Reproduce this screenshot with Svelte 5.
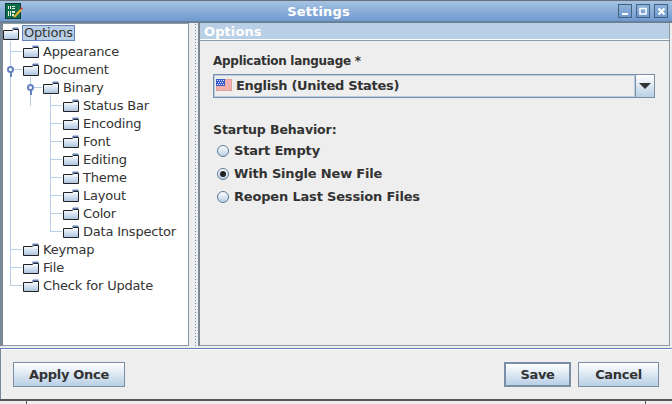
<script>
  const tree = [
    { label: 'Options', level: 0, selected: true, root: true },
    { label: 'Appearance', level: 1 },
    { label: 'Document', level: 1, open: true },
    { label: 'Binary', level: 2, open: true },
    { label: 'Status Bar', level: 3 },
    { label: 'Encoding', level: 3 },
    { label: 'Font', level: 3 },
    { label: 'Editing', level: 3 },
    { label: 'Theme', level: 3 },
    { label: 'Layout', level: 3 },
    { label: 'Color', level: 3 },
    { label: 'Data Inspector', level: 3 },
    { label: 'Keymap', level: 1 },
    { label: 'File', level: 1 },
    { label: 'Check for Update', level: 1 }
  ];
  const radios = [
    { label: 'Start Empty', checked: false },
    { label: 'With Single New File', checked: true },
    { label: 'Reopen Last Session Files', checked: false }
  ];
</script>

<div class="window">
  <header class="titlebar">
    <svg class="appicon" width="18" height="17" viewBox="0 0 18 17">
      <rect x="0.5" y="0.5" width="15" height="15" fill="#0f6b4e" stroke="#0b3d33"/>
      <path d="M3 3h1v3H3zM5 3h1v3H5zM7 3h3v1H7zM7 5h3v1H7zM3 8h1v5H3zM5 8h1v5H5zM7 8h3v2H7zM7 11h2v2H7z" fill="#e8f0d8"/>
      <path d="M8 14l7-8 2 1.500-7 7z" fill="#e8b030"/>
      <path d="M15 5l1-1 2 1.500-1 1.500z" fill="#d84040"/>
    </svg>
    <span class="title">Settings</span>
    <div class="winbtns">
      <span class="winbtn"><svg width="8" height="8" viewBox="0 0 8 8"><rect x="1" y="6" width="6" height="2" fill="#fff"/></svg></span>
      <span class="winbtn"><svg width="8" height="8" viewBox="0 0 8 8"><path d="M1 1.500h6v5.500h-6z" fill="none" stroke="#fff" stroke-width="1.500"/></svg></span>
      <span class="winbtn"><svg width="9" height="9" viewBox="0 0 9 9"><path d="M1.500 1.500l6 6M7.500 1.500l-6 6" stroke="#fff" stroke-width="2.200"/></svg></span>
    </div>
  </header>

  <div class="main">
    <nav class="tree">
      {#each tree as item}
        <div class="row lvl{item.level}" class:root={item.root}>
          {#if !item.root}<span class="hline"></span>{/if}
          {#if item.open}<span class="knob"></span>{/if}
          <svg class="folder" width="16" height="13" viewBox="0 0 16 13">
            <defs>
              <linearGradient id="fg" x1="0" y1="0" x2="0" y2="1">
                <stop offset="0" stop-color="#fff"/>
                <stop offset="1" stop-color="#a9c3e0"/>
              </linearGradient>
            </defs>
            <path d="M9 1.500l1.500-1h5v2h-6.500z" fill="#6382bf"/>
            <path d="M0.500 3.500h9l1-1h5v10h-15z" fill="url(#fg)" stroke="#222"/>
          </svg>
          <span class="label" class:selected={item.selected}>{item.label}</span>
        </div>
      {/each}
      <span class="vline v1"></span>
      <span class="vline v2"></span>
      <span class="vline v3"></span>
    </nav>

    <div class="divider"></div>

    <section class="panel">
      <h2 class="paneltitle">Options</h2>
      <div class="panelbody">
        <div class="field-label">Application language *</div>
        <div class="combo">
          <div class="combo-value">
            <svg width="16" height="12" viewBox="0 0 16 12">
              <rect width="16" height="12" fill="#fff"/>
              <path d="M0 1h16M0 3h16M0 5h16M0 7h16M0 9h16M0 11h16" stroke="#e8605c" stroke-width="1"/>
              <rect x="0.250" y="0.250" width="15.500" height="11.500" fill="none" stroke="#c98" stroke-width="0.500"/>
              <rect x="0" y="0" width="9" height="7" fill="#3a5cc8"/>
              <path d="M1 1.500h1M3 1.500h1M5 1.500h1M7 1.500h1M2 3.500h1M4 3.500h1M6 3.500h1M1 5.500h1M3 5.500h1M5 5.500h1M7 5.500h1" stroke="#dde6ff" stroke-width="1"/>
            </svg>
            <span>English (United States)</span>
          </div>
          <div class="combo-btn"><span class="arrow"></span></div>
        </div>

        <div class="group-label">Startup Behavior:</div>
        <div class="radios">
          {#each radios as r}
            <div class="radio-row">
              <span class="radio" class:checked={r.checked}></span>
              <span>{r.label}</span>
            </div>
          {/each}
        </div>
      </div>
    </section>
  </div>

  <footer class="footer">
    <button class="btn apply">Apply Once</button>
    <div class="spacer"></div>
    <button class="btn save">Save</button>
    <button class="btn cancel">Cancel</button>
  </footer>
  <div class="under"><span class="tick t1"></span><span class="tick t2"></span></div>
</div>

<style>
  :global(body) { margin: 0; background: #fff; }
  .window {
    width: 672px; height: 404px; box-sizing: border-box; overflow: hidden;
    display: flex; flex-direction: column;
    font-family: "DejaVu Sans", sans-serif; font-size: 12px; color: #333;
    background: #eee;
  }
  .titlebar {
    height: 23px; flex: none; box-sizing: border-box; position: relative;
    border-top: 1px solid #66707c; border-bottom: 2px solid #6a7f98;
    background: linear-gradient(#a6c2e2, #6f9ad0);
    display: flex; align-items: center;
  }
  .appicon { margin-left: 5px; }
  .title {
    position: absolute; left: 0; width: 637px; text-align: center;
    color: #fff; font-weight: bold; font-size: 13px; letter-spacing: 0.15px;
  }
  .winbtns { margin-left: auto; margin-right: 4px; display: flex; gap: 4px; position: relative; }
  .winbtn {
    width: 12px; height: 12px; border: 1px solid #44617f; box-sizing: content-box;
    display: flex; align-items: center; justify-content: center;
    background: linear-gradient(#8fb2dc, #6f9ad0);
  }
  .main {
    flex: none; height: 323px; display: flex;
    border-left: 3px solid #7a8794; box-sizing: border-box;
    border-right: 2px solid #eee;
  }
  .tree {
    width: 186px; flex: none; background: #fff; position: relative;
    border-top: 1px solid #8a99a6; border-bottom: 1px solid #8a99a6; border-right: 1px solid #8a99a6;
    box-sizing: border-box; color: #333;
  }
  .row { height: 18px; display: flex; align-items: center; position: relative; font-size: 13px; letter-spacing: -0.2px; }
  .lvl0 { padding-left: 0; }
  .lvl1 { padding-left: 20px; }
  .lvl2 { padding-left: 40px; }
  .lvl3 { padding-left: 60px; }
  .folder { flex: none; }
  .label { margin-left: 4px; line-height: 16px; position: relative; top: 1px; }
  .label.selected { top: 0; background: #b8cfe5; outline: 1px solid #6382bf; outline-offset: -1px; margin-left: 3px; padding: 0 2px; }
  .hline { position: absolute; height: 1px; background: #b8cfe5; top: 9px; }
  .lvl1 .hline { left: 7px; width: 12px; }
  .lvl2 .hline { left: 27px; width: 12px; }
  .lvl3 .hline { left: 47px; width: 12px; }
  .knob {
    position: absolute; width: 3px; height: 3px; border: 2px solid #6382bf; border-radius: 50%;
    background: #fff; top: 6px; z-index: 1;
  }
  .knob::after {
    content: ""; position: absolute; left: 0.500px; top: 4px; width: 2px; height: 5px; background: #6382bf;
  }
  .lvl1 .knob { left: 4px; }
  .lvl2 .knob { left: 24px; }
  .vline { position: absolute; width: 1px; background: #b8cfe5; }
  .v1 { left: 7px; top: 17px; height: 245px; }
  .v2 { left: 27px; top: 53px; height: 29px; }
  .v3 { left: 47px; top: 71px; height: 136px; }
  .divider {
    width: 11px; flex: none; box-sizing: border-box; background-color: #eee;
    background-image: radial-gradient(#6f8fb5 0.7px, transparent 0.9px);
    background-size: 3px 3px; background-position: 5px 0; background-repeat: repeat-y;
    border-right: 2px solid #7a8794;
  }
  .panel { flex: 1; display: flex; flex-direction: column; border-right: 1px solid #8a99a6; border-bottom: 1px solid #8a99a6; }
  .paneltitle {
    margin: 0; height: 16px; flex: none; background: #b8cfe5; color: #fff;
    font-size: 13px; font-weight: bold; line-height: 18px; padding-left: 4px; letter-spacing: 0.1px;
    border-bottom: 1px solid #fff;
  }
  .panelbody { flex: 1; padding: 12px 14px 0 12px; border-top: 1px solid #8a99a6; }
  .field-label { padding-left: 1px; font-size: 12px; font-weight: bold; line-height: 16px; letter-spacing: -0.28px; }
  .combo {
    margin-top: 5px; margin-left: 1px; height: 24px; box-sizing: border-box; display: flex;
    border: 1px solid #7a8fa6; background: #eee;
  }
  .combo-value {
    flex: 1; display: flex; align-items: center; gap: 4px; padding: 0 0 2px 1px;
    border: 1px solid #b8cfe5; font-size: 13px; font-weight: bold; letter-spacing: -0.3px;
  }
  .combo-btn {
    width: 18px; border-left: 1px solid #7a8fa6; display: flex; align-items: center; justify-content: center;
    background: linear-gradient(#fff, #b8cfe5);
  }
  .arrow { width: 0; height: 0; border-left: 6px solid transparent; border-right: 6px solid transparent; border-top: 6px solid #333; }
  .group-label { margin-top: 24px; padding-left: 1px; font-size: 12.500px; font-weight: bold; line-height: 16px; letter-spacing: -0.1px; }
  .radios { margin-top: 1px; padding-left: 5px; }
  .radio-row { height: 23px; display: flex; align-items: center; gap: 5px; font-size: 13px; font-weight: bold; letter-spacing: -0.18px; }
  .radio {
    width: 12px; height: 12px; box-sizing: border-box; border-radius: 50%;
    border: 1px solid #5f7a96; background: linear-gradient(#fff, #b8cfe5);
    display: inline-flex; align-items: center; justify-content: center;
  }
  .radio.checked::after { content: ""; width: 6px; height: 6px; border-radius: 50%; background: #222; }
  .footer {
    flex: none; height: 51px; box-sizing: border-box; border-top: 1px solid #6382bf;
    margin-top: 2px;
    display: flex; align-items: flex-start; padding: 13px 13px 0 12px; gap: 7px;
    box-shadow: inset 0 1px 0 #fff;
    border-left: 1px solid #7a8794;
  }
  .spacer { flex: 1; }
  .btn {
    height: 25px; box-sizing: border-box; font-family: inherit; font-size: 13px; font-weight: bold;
    padding: 0; letter-spacing: -0.3px;
    color: #333; border: 1px solid #7a8fa6; background: linear-gradient(#fff, #b8cfe5);
  }
  .apply { width: 112px; }
  .save { width: 67px; border: 2px solid #7a8fa6; }
  .cancel { width: 81px; }
  .under { flex: 1; border-top: 2px solid #555; background: #eee; position: relative; }
  .tick { position: absolute; top: 0; bottom: 0; width: 1px; background: #555; }
  .t1 { left: 26px; }
  .t2 { left: 645px; }
</style>
